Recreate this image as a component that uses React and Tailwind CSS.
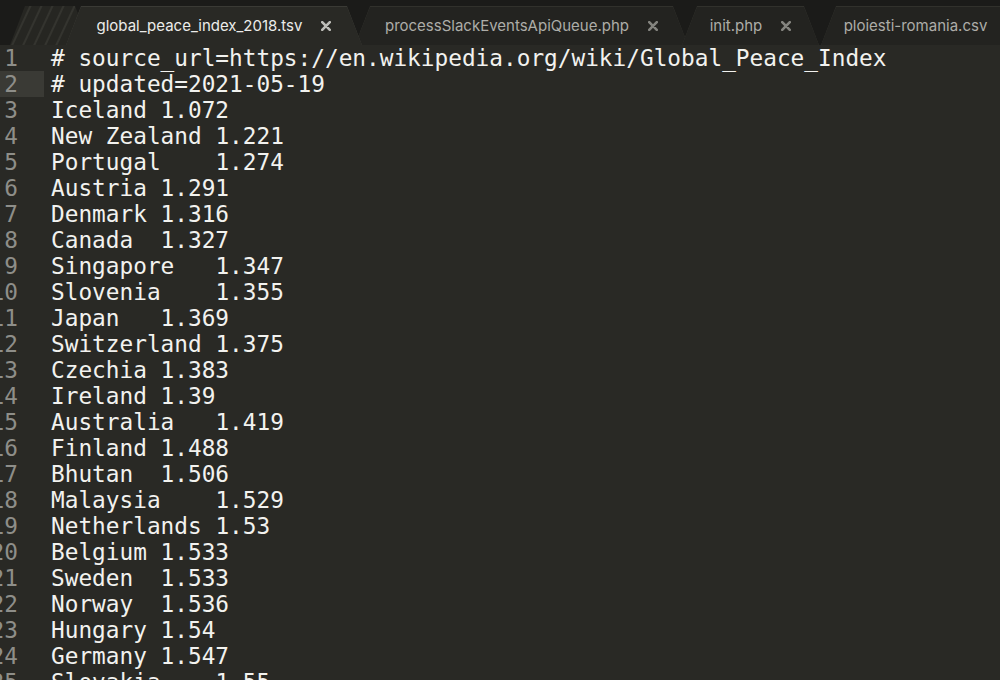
import React from 'react';

const lines = [
  '# source_url=https://en.wikipedia.org/wiki/Global_Peace_Index',
  '# updated=2021-05-19',
  'Iceland\t1.072',
  'New Zealand\t1.221',
  'Portugal\t1.274',
  'Austria\t1.291',
  'Denmark\t1.316',
  'Canada\t1.327',
  'Singapore\t1.347',
  'Slovenia\t1.355',
  'Japan\t1.369',
  'Switzerland\t1.375',
  'Czechia\t1.383',
  'Ireland\t1.39',
  'Australia\t1.419',
  'Finland\t1.488',
  'Bhutan\t1.506',
  'Malaysia\t1.529',
  'Netherlands\t1.53',
  'Belgium\t1.533',
  'Sweden\t1.533',
  'Norway\t1.536',
  'Hungary\t1.54',
  'Germany\t1.547',
  'Slovakia\t1.55',
];

const CloseIcon = ({ color }) => (
  <svg width="10" height="10" viewBox="0 0 10 10" className="shrink-0">
    <path d="M1.2 1.2 L8.8 8.8 M8.8 1.2 L1.2 8.8" stroke={color} strokeWidth="2.6" strokeLinecap="round" />
  </svg>
);

// trapezoid tab, border layer + fill layer
const Tab = ({ label, active, width, className }) => (
  <div
    className={`h-[39px] shrink-0 [clip-path:polygon(15px_0,calc(100%-15px)_0,100%_100%,0_100%)] ${
      active ? 'relative z-10 bg-[#3a3a35]' : 'bg-[#31312c]'
    } ${className}`}
    style={{ width }}
  >
    <div
      className={`mt-px h-[38px] flex items-center justify-center gap-[19px] [clip-path:polygon(15px_0,calc(100%-15px)_0,100%_100%,0_100%)] ${
        active ? 'bg-[#292925] text-[#ececea]' : 'bg-[#232320] text-[#adada8]'
      }`}
    >
      <span className="text-[15px] whitespace-nowrap">{label}</span>
      <CloseIcon color={active ? '#bdbdb8' : '#83837e'} />
    </div>
  </div>
);

export default function App() {
  return (
    <div className="w-[1000px] h-[680px] overflow-hidden bg-[#292925] flex flex-col">
      {/* Tab bar */}
      <div className="h-[45px] shrink-0 bg-[#1b1b19] flex items-end overflow-hidden font-['Inter','Liberation_Sans',sans-serif]">
        <div className="ml-[10px] w-[80px] h-[39px] shrink-0 [clip-path:polygon(15px_0,calc(100%-15px)_0,100%_100%,0_100%)] bg-[repeating-linear-gradient(115deg,#262622_0px,#262622_7px,#34342f_8px,#34342f_9px,#262622_10px)]" />
        <Tab label="global_peace_index_2018.tsv" active width={296} className="-ml-[24px]" />
        <Tab label="processSlackEventsApiQueue.php" width={333} className="-ml-[7px]" />
        <Tab label="init.php" width={137} className="-ml-[6px]" />
        <Tab label="ploiesti-romania.csv" width={218} className="ml-[2px]" />
      </div>

      {/* Editor */}
      <div className="flex-1 flex font-['DejaVu_Sans_Mono',monospace] text-[22.75px] leading-[26px] [tab-size:4]">
        <div className="w-[44px] shrink-0 flex flex-col text-[#8e8e89]">
          {lines.map((_, i) => (
            <div
              key={i}
              className={`h-[26px] flex justify-end pr-[26px] whitespace-nowrap ${i === 1 ? 'bg-[#3a3a35]' : ''}`}
            >
              {i + 1}
            </div>
          ))}
        </div>
        <div className="flex-1 pl-[7px] flex flex-col text-[#f2f2ef]">
          {lines.map((line, i) => (
            <div key={i} className="h-[26px] whitespace-pre">
              {line}
            </div>
          ))}
        </div>
      </div>
    </div>
  );
}
